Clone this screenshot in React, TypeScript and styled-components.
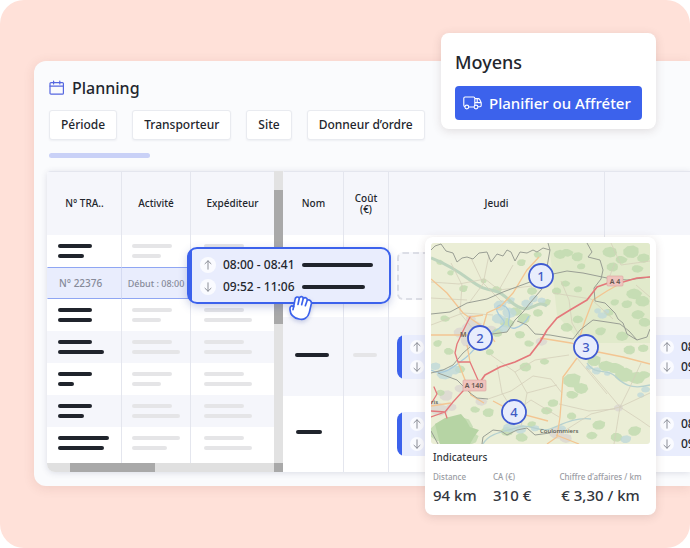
import React from "react";
import styled, { createGlobalStyle } from "styled-components";

const Global = createGlobalStyle`
  *, *::before, *::after { box-sizing: border-box; }
  body {
    margin: 0;
    background: #ffffff;
    color: #23262d;
    font-family: "Noto Sans", "Open Sans", sans-serif;
    font-weight: 500;
  }
`;

const BLUE = "#3c62ec";
const LINE = "#e4e6ee";
const STRIPE = "#f5f6fb";

const Hero = styled.main`
  position: relative;
  overflow: hidden;
  padding: 61px 0 62px 34px;
  border-radius: 24px;
  background: #ffe1d9;
`;

const Panel = styled.section`
  padding: 15px 0 14px 13px;
  border-radius: 12px 0 0 12px;
  background: #fafbfd;
  box-shadow: 0 2px 12px rgba(120, 60, 50, 0.12);
`;

const TitleRow = styled.header`
  display: flex;
  align-items: center;
  gap: 7px;
  padding-left: 2px;
`;

const Title = styled.h1`
  margin: 0;
  font-size: 16px;
  font-weight: 500;
  line-height: 24px;
`;

const Filters = styled.div`
  display: flex;
  gap: 15px;
  margin-top: 10px;
  padding-left: 2px;
`;

const FilterButton = styled.button`
  height: 30px;
  padding: 0 11px;
  border: 1px solid #e9ebf0;
  border-radius: 3px;
  background: #ffffff;
  box-shadow: 0 1px 2px rgba(40, 50, 90, 0.06);
  color: inherit;
  font: 500 12px/16px "Noto Sans", sans-serif;
  white-space: nowrap;
`;

const Progress = styled.div`
  width: 101px;
  height: 5px;
  margin: 13px 0 13px 2px;
  border-radius: 3px;
  background: #c9d1f7;
`;

const Board = styled.div`
  display: flex;
  overflow: hidden;
  border-radius: 4px 0 0 8px;
  box-shadow: 0 1px 6px rgba(60, 70, 110, 0.16);
  background: #ffffff;
`;

const Frozen = styled.div`
  flex: none;
  width: 227px;
`;

const Sheet = styled.table`
  width: 100%;
  table-layout: fixed;
  border-collapse: separate;
  border-spacing: 0;
`;

const Col = styled.col<{ $w?: number }>`
  width: ${(p) => (p.$w ? `${p.$w}px` : "auto")};
`;

const Head = styled.th`
  height: 64px;
  padding: 0;
  border-top: 1px solid ${LINE};
  border-left: 1px solid ${LINE};
  background: ${STRIPE};
  font-size: 10px;
  font-weight: 500;
  line-height: 11px;
  text-align: center;
  &:first-child { border-left-color: transparent; }
`;

const Row = styled.tr<{ $h: number; $striped?: boolean }>`
  height: ${(p) => p.$h}px;
  background: ${(p) => (p.$striped ? STRIPE : "#ffffff")};
`;

const BarCell = styled.td<{ $inset: number }>`
  padding: 9px 0 0 ${(p) => p.$inset}px;
  border-left: 1px solid ${LINE};
  vertical-align: top;
  &:first-child { border-left-color: transparent; }
`;

const PickedCell = styled.td`
  padding: 0;
  border-top: 1px solid #8fa6f3;
  border-bottom: 1px solid #8fa6f3;
  border-left: 1px solid #d5dbf2;
  background: #e9edfd;
  color: #868a99;
  font-size: 10px;
  text-align: center;
  white-space: nowrap;
  &:first-child {
    padding-left: 11px;
    border-left-color: #e9edfd;
    text-align: left;
  }
`;

const SmallText = styled.span`
  font-size: 9px;
`;

const Bar = styled.div<{ $w: number; $tone?: "dark" | "light" }>`
  width: ${(p) => p.$w}px;
  height: 4px;
  border-radius: 2px;
  background: ${(p) => (p.$tone === "light" ? "#e5e5e7" : "#20242c")};
  & + & { margin-top: 6px; }
`;

const HScroll = styled.div`
  height: 9px;
  padding-left: 23px;
  background: #e0e0e0;
`;

const HThumb = styled.div`
  width: 85px;
  height: 9px;
  background: #a9a9a9;
`;

const VScroll = styled.div`
  display: flex;
  flex: none;
  flex-direction: column;
  justify-content: space-between;
  width: 9px;
  padding-top: 19px;
  background: #e2e2e2;
`;

const VThumb = styled.div<{ $h: number }>`
  height: ${(p) => p.$h}px;
  background: #a9a9a9;
`;

const Timeline = styled.div`
  flex: 1;
  min-width: 0;
  overflow: hidden;
`;

const MidCell = styled.td<{ $inset: number }>`
  padding: 0 0 0 ${(p) => p.$inset}px;
  overflow: hidden;
  border-left: 1px solid ${LINE};
  &:first-child { border-left-color: transparent; }
`;

const LineCell = styled(MidCell)`
  padding-bottom: 4px;
`;

const Slot = styled.div`
  width: 200px;
  height: 48px;
  border: 2px dashed #dcdee6;
  border-radius: 6px;
  background: #f7f8fc;
`;

const Event = styled.div`
  display: grid;
  gap: 4px;
  width: 200px;
  padding: 4px 0 4px 13px;
  border-radius: 8px;
  background: linear-gradient(to right, ${BLUE} 5px, #e9edfd 5px);
`;

const Leg = styled.div<{ $gap: number }>`
  display: flex;
  align-items: center;
  gap: ${(p) => p.$gap}px;
  font-size: 12px;
  line-height: 16px;
  white-space: nowrap;
`;

const Dot = styled.span<{ $size: number }>`
  display: flex;
  flex: none;
  align-items: center;
  justify-content: center;
  width: ${(p) => p.$size}px;
  height: ${(p) => p.$size}px;
  border-radius: 50%;
  background: #fafbff;
`;

const Dragged = styled.div`
  position: absolute;
  top: 247px;
  left: 187px;
  display: grid;
  align-content: center;
  gap: 6px;
  width: 204px;
  height: 57px;
  padding-left: 11px;
  border: 2px solid ${BLUE};
  border-radius: 10px;
  background: linear-gradient(to right, ${BLUE} 3px, #e9edfd 3px);
  box-shadow: 0 3px 8px rgba(50, 70, 160, 0.25);
`;

const Grab = styled.svg`
  position: absolute;
  top: 295px;
  left: 288px;
  filter: drop-shadow(0 2px 2px rgba(50, 70, 160, 0.25));
`;

const Floating = styled.section`
  position: absolute;
  right: 34px;
  border-radius: 8px;
  background: #ffffff;
  box-shadow: 0 2px 10px rgba(90, 60, 60, 0.16);
`;

const Means = styled(Floating)`
  top: 33px;
  width: 215px;
  padding: 17px 14px 9px;
`;

const MeansTitle = styled.h2`
  margin: 0 0 12px;
  font-size: 18px;
  font-weight: 500;
  line-height: 24px;
`;

const Primary = styled.button`
  display: flex;
  align-items: center;
  gap: 7px;
  width: 100%;
  height: 34px;
  padding: 0 8px;
  border: 0;
  border-radius: 4px;
  background: ${BLUE};
  color: #ffffff;
  font: 500 15px/20px "Noto Sans", sans-serif;
  white-space: nowrap;
`;

const MapCard = styled(Floating)`
  top: 237px;
  width: 231px;
  padding: 6px 6px 9px;
`;

const MapSvg = styled.svg`
  display: block;
  width: 100%;
  height: auto;
  border-radius: 3px;
`;

const Subtitle = styled.h3`
  margin: 5px 2px 5px;
  color: #34373e;
  font-size: 10px;
  font-weight: 500;
  line-height: 16px;
`;

const Stats = styled.dl`
  display: grid;
  grid-template-columns: 60px 60px 1fr;
  margin: 0 2px;
`;

const Stat = styled.div<{ $center?: boolean }>`
  text-align: ${(p) => (p.$center ? "center" : "left")};
  white-space: nowrap;
`;

const StatLabel = styled.dt`
  color: #9a9ca3;
  font-size: 8px;
  line-height: 14px;
`;

const StatValue = styled.dd`
  margin: 0;
  color: #34373e;
  font-size: 15px;
  line-height: 22px;
`;

function CalendarIcon() {
  return (
    <svg width="16" height="16" viewBox="0 0 16 16" fill="none" stroke="#5567e0" strokeWidth="1.2" strokeLinecap="round" aria-hidden="true">
      <rect x="1" y="2.6" width="13.4" height="11.6" rx="1" />
      <path d="M1 6.1H14.4M4.6 1V4M10.8 1V4" />
    </svg>
  );
}

function TruckIcon() {
  return (
    <svg width="19" height="14" viewBox="0 0 19 14" fill="none" stroke="#ffffff" strokeWidth="1.1" strokeLinecap="round" strokeLinejoin="round" aria-hidden="true">
      <path d="M1.8 10.6C1 10.4.8 10 .8 9.2V2.2C.8 1.4 1.2 1 2 1H10.6C11.4 1 11.8 1.4 11.8 2.2V8.8M5.9 11H10.6M11.8 2.6H15.2C16 2.6 16.4 2.9 16.7 3.6L18.2 6.8V9.6C18.2 10.3 17.8 10.7 17 10.8H15.4M14.2 2.8V6.6H18M11.8 6.6H14.2" />
      <circle cx="3.8" cy="11" r="1.9" />
      <circle cx="13" cy="11" r="1.9" />
    </svg>
  );
}

function Arrow({ down }: { down?: boolean }) {
  return (
    <svg width="10" height="10" viewBox="0 0 10 10" fill="none" stroke="#8b8e97" strokeWidth="1" strokeLinecap="round" strokeLinejoin="round" aria-hidden="true">
      <path d={down ? "M5 .8V9.2M2 6.3L5 9.2L8 6.3" : "M5 9.2V.8M2 3.7L5 .8L8 3.7"} />
    </svg>
  );
}

const woods: [number, number, number][] = [
  [12, 190, 11], [26, 184, 13], [35, 193, 10], [22, 196, 12], [9, 150, 4], [44, 166, 4], [58, 170, 5],
  [128, 12, 6], [136, 9, 5], [147, 14, 5], [178, 10, 7], [190, 16, 5], [201, 9, 7], [212, 16, 6], [206, 25, 5],
  [182, 24, 5], [150, 24, 4], [134, 40, 4], [126, 48, 4], [147, 47, 4], [202, 50, 7], [212, 58, 6], [196, 62, 5],
  [206, 71, 6], [214, 79, 5], [184, 60, 4], [146, 76, 5], [136, 84, 5], [170, 89, 5], [190, 93, 6], [178, 69, 4],
  [116, 60, 4], [100, 48, 5], [85, 68, 5], [94, 76, 6], [106, 70, 5], [76, 79, 6], [67, 90, 5], [88, 92, 5],
  [98, 100, 4], [142, 138, 8], [149, 146, 7], [141, 151, 5], [164, 118, 6], [174, 124, 7], [184, 124, 7],
  [194, 132, 8], [205, 136, 8], [213, 131, 5], [199, 107, 5], [212, 106, 5], [113, 118, 4], [95, 124, 5],
  [122, 161, 5], [115, 167, 5], [141, 173, 4], [168, 183, 6], [160, 192, 5], [186, 194, 5], [204, 189, 6],
  [75, 188, 6], [91, 194, 5], [101, 182, 4], [28, 126, 5], [18, 108, 4], [7, 101, 4], [58, 109, 4],
  [9, 19, 3], [33, 46, 4], [52, 38, 3], [66, 46, 4], [91, 20, 4], [106, 12, 4], [14, 75, 4], [20, 30, 3],
];

const waters: [number, number, number][] = [
  [70, 63, 6], [77, 70, 7], [68, 75, 6], [80, 58, 4], [72, 86, 5], [96, 60, 5], [103, 56, 4], [110, 58, 4],
  [171, 72, 4], [167, 68, 3], [175, 69, 3], [158, 124, 3], [166, 128, 4], [176, 131, 3], [13, 130, 7], [24, 127, 5],
  [4, 124, 5], [78, 184, 6], [90, 186, 5], [104, 186, 4], [214, 146, 4], [210, 152, 3], [195, 197, 5], [130, 185, 4],
];

const towns: [number, number, number][] = [
  [42, 86, 9], [36, 98, 8], [52, 100, 7], [30, 90, 6], [39, 76, 5], [8, 165, 8], [16, 153, 6], [28, 146, 5],
  [50, 158, 5], [127, 190, 7], [134, 196, 6], [110, 98, 5], [188, 165, 4], [20, 165, 5], [60, 85, 4],
];

const blob = ([x, y, r]: [number, number, number], i: number) => {
  const points = Array.from({ length: 9 }, (_, k) => {
    const a = (k / 9) * Math.PI * 2;
    const d = r * (0.65 + 0.5 * Math.abs(Math.sin(i * 7.3 + k * 2.9)));
    return `${(x + Math.cos(a) * d * 1.15).toFixed(1)} ${(y + Math.sin(a) * d * 0.85).toFixed(1)}`;
  });
  return `M${points.join("L")}Z`;
};

const markers = [
  { n: 1, x: 110, y: 33 },
  { n: 2, x: 49, y: 95 },
  { n: 3, x: 155, y: 104 },
  { n: 4, x: 83, y: 169 },
];

function RouteMap() {
  return (
    <MapSvg viewBox="0 0 219 201" fontFamily="Noto Sans, sans-serif" role="img" aria-label="Carte">
      <rect width="219" height="201" fill="#ebeed6" />
      <path d="M118 0H219V100H150L126 72Z" fill="#e1eacb" />
      <path d={towns.map(blob).join("")} fill="#dedbd2" />
      <path d={woods.map(blob).join("")} fill="#bfd9ae" opacity=".8" />
      <path d="M4 181L14 175L30 171L35 177L39 184L48 187L43 194L39 201H9Z" fill="#b6d4a4" />
      <path d={waters.map(blob).join("")} fill="#bfd8d9" opacity=".8" />
      <path d="M0 15C18 22 28 29 39 37S52 45 64 48S78 61 90 65S106 56 116 63" fill="none" stroke="#bdd4bd" strokeWidth="3" />
      <path d="M0 127C12 134 22 124 33 116S46 99 64 88S69 78 66 68S82 61 78 76S92 86 98 73" fill="none" stroke="#a9cbdc" strokeWidth="1.3" />
      <path d="M156 120C164 133 176 125 184 133S200 147 219 142M52 201C58 189 78 188 88 184S108 190 119 186S143 174 160 176" fill="none" stroke="#b6d1cf" strokeWidth="1.3" />
      <g fill="none" stroke="#d4cfba" strokeWidth=".8">
        <path d="M0 39L28 41L54 36L68 47L101 43M20 20L31 42L29 70L42 86M58 12L52 41L38 60M40 15L52 40L71 59M82 22L68 47M0 55L36 57M0 82L32 70L62 72" />
        <path d="M60 112L84 129L96 150L126 142M57 156L80 148L102 133L120 136L131 150M84 129L104 117L138 112M66 122L71 150L83 169L100 157L128 174M96 150L90 184" />
        <path d="M130 38L138 57L141 80L155 104M122 50L160 56L182 76M184 20L176 40M205 42L219 54M180 0L190 22L219 18" />
        <path d="M156 125L174 146L189 164L209 177L219 184M189 164L160 171L130 190M189 164L219 150M189 164L183 201M189 164L198 146L210 120M146 115L176 151M128 161L158 168L184 166" />
      </g>
      <g fill="none" stroke="#f3c592" strokeWidth="1.3">
        <path d="M0 36L16 50L32 70L56 87L64 99M108 14L96 27L82 50L69 64L56 70L52 84M0 92H48" />
        <path d="M192 39L176 48L162 57L154 78L148 96M109 95L140 100L167 109L192 114L219 121M146 115L132 134L129 174L126 194L116 201" />
        <path d="M39 74L52 72M27 119L40 152L53 160M39 119L36 102M62 158L83 169L117 178M125 192L148 201M0 163L20 160" />
      </g>
      <g fill="none" stroke="#999e94" strokeWidth="1" strokeLinejoin="round">
        <path d="M0 7L4 3L10 1L15 8L22 10L26 19L31 15L36 14L42 16L48 10L56 9L60 19L66 11L72 13L76 7L80 9L84 18L89 9L96 10L102 7L106 9L112 5L119 7L116 24M117 0L119 7" />
        <path d="M0 71L19 69L36 60L56 56L72 49L99 39L110 33L122 31L136 28L152 30L176 35L196 37L219 34" />
        <path d="M111 46L99 60L92 69L84 77L76 89L61 91M86 78L96 82L104 91L119 92L142 96L149 87L162 77L176 79L189 81L198 88L206 97" />
        <path d="M156 0L161 9L157 14L169 17L172 27L170 36L163 45L164 58L174 60L184 70L187 76L192 80L196 91L206 97L216 94L219 86" />
        <path d="M0 130L12 127L22 122L32 110L39 104M7 130L26 137L39 150L46 155L57 156M0 188L7 201M51 201L52 194L62 187L70 188L76 192L86 187L96 185L104 192L119 190" />
      </g>
      <g fill="none" stroke="#e4787b" strokeWidth="1.7" strokeLinejoin="round" strokeLinecap="round">
        <path d="M219 34L206 35L192 39L180 39L166 44L156 57L139 67L126 75L116 87L109 99L99 112L84 119L69 124L54 132L47 142" />
        <path d="M42 143L32 148L22 159L14 169L0 174M39 74L32 88L26 101L24 110L27 119L39 119L47 137M3 144L6 151L0 161M0 168L14 169L16 175" strokeWidth="1.3" />
      </g>
      <g fill="#efc3bd" stroke="#dca39f" strokeWidth=".6">
        <rect x="32" y="137" width="23" height="11" rx="1" />
        <rect x="176" y="33" width="16" height="10" rx="1" />
      </g>
      <g fill="#62564f" textAnchor="middle" fontWeight="600">
        <text x="43" y="145" fontSize="7">A 140</text>
        <text x="184" y="41" fontSize="7">A 4</text>
      </g>
      <g fill="#55574f" fontSize="6">
        <text x="29" y="94" fontSize="7">M</text>
        <text x="0" y="161">ris</text>
        <text x="109" y="190">Coulommiers</text>
      </g>
      {markers.map((m) => (
        <g key={m.n}>
          <circle cx={m.x} cy={m.y} r="12" fill="#e8edfc" stroke="#3f5bd2" strokeWidth="1.8" />
          <text x={m.x} y={m.y + 5} textAnchor="middle" fontSize="13" fill="#3f5bc4">{m.n}</text>
        </g>
      ))}
    </MapSvg>
  );
}

function Shipment() {
  return (
    <Event>
      <Leg $gap={7}><Dot $size={14}><Arrow /></Dot>08:00 - 08:41</Leg>
      <Leg $gap={7}><Dot $size={14}><Arrow down /></Dot>09:52 - 11:06</Leg>
    </Event>
  );
}

type Lines = { bars: number[][]; striped?: boolean; h?: number };
const before: Lines[] = [{ bars: [[34, 26], [40, 29], [40, 48]] }];
const after: Lines[] = [
  { bars: [[34, 34], [40, 29], [40, 48]] },
  { bars: [[34, 46], [40, 48], [40, 48]], striped: true },
  { bars: [[34, 16], [40, 29], [40, 48]] },
  { bars: [[34, 26], [40, 48], [40, 48]], striped: true },
  { bars: [[51, 46], [48, 35], [40, 48]], h: 36 },
];
const insets = [10, 10, 13];

function BarRow({ bars, striped, h = 32 }: Lines) {
  return (
    <Row $h={h} $striped={striped}>
      {bars.map((pair, c) => (
        <BarCell key={c} $inset={insets[c]}>
          {pair.map((w, i) => <Bar key={i} $w={w} $tone={c ? "light" : "dark"} />)}
        </BarCell>
      ))}
    </Row>
  );
}

export default function App() {
  return (
    <>
      <Global />
      <Hero>
        <Panel>
          <TitleRow>
            <CalendarIcon />
            <Title>Planning</Title>
          </TitleRow>
          <Filters>
            {["Période", "Transporteur", "Site", "Donneur d’ordre"].map((f) => (
              <FilterButton key={f} type="button">{f}</FilterButton>
            ))}
          </Filters>
          <Progress />
          <Board>
            <Frozen>
              <Sheet>
                <colgroup><Col $w={74} /><Col $w={69} /><Col $w={84} /></colgroup>
                <thead>
                  <tr><Head>N° TRA..</Head><Head>Activité</Head><Head>Expéditeur</Head></tr>
                </thead>
                <tbody>
                  {before.map((r, i) => <BarRow key={i} {...r} />)}
                  <Row $h={32}>
                    <PickedCell>N° 22376</PickedCell>
                    <PickedCell><SmallText>Début : 08:00</SmallText></PickedCell>
                    <PickedCell />
                  </Row>
                  {after.map((r, i) => <BarRow key={i} {...r} />)}
                </tbody>
              </Sheet>
              <HScroll><HThumb /></HScroll>
            </Frozen>
            <VScroll><VThumb $h={134} /><VThumb $h={9} /></VScroll>
            <Timeline>
              <Sheet>
                <colgroup><Col $w={60} /><Col $w={45} /><Col $w={216} /><Col /></colgroup>
                <thead>
                  <tr><Head>Nom</Head><Head>Coût<br />(€)</Head><Head>Jeudi</Head><Head /></tr>
                </thead>
                <tbody>
                  <Row $h={82}>
                    <MidCell $inset={0} /><MidCell $inset={0} />
                    <MidCell $inset={8}><Slot /></MidCell>
                    <MidCell $inset={0} />
                  </Row>
                  <Row $h={79} $striped>
                    <LineCell $inset={11}><Bar $w={34} /></LineCell>
                    <LineCell $inset={9}><Bar $w={24} $tone="light" /></LineCell>
                    <MidCell $inset={8}><Shipment /></MidCell>
                    <MidCell $inset={42}><Shipment /></MidCell>
                  </Row>
                  <Row $h={76}>
                    <LineCell $inset={12}><Bar $w={26} /></LineCell>
                    <MidCell $inset={0} />
                    <MidCell $inset={8}><Shipment /></MidCell>
                    <MidCell $inset={42}><Shipment /></MidCell>
                  </Row>
                </tbody>
              </Sheet>
            </Timeline>
          </Board>
        </Panel>

        <Dragged>
          <Leg $gap={7}><Dot $size={16}><Arrow /></Dot>08:00 - 08:41<Bar $w={71} /></Leg>
          <Leg $gap={7}><Dot $size={16}><Arrow down /></Dot>09:52 - 11:06<Bar $w={63} /></Leg>
        </Dragged>
        <Grab width="25" height="26" viewBox="0 0 75 78" fill="#ffffff" stroke={BLUE} strokeWidth="5" strokeLinejoin="round" strokeLinecap="round" aria-hidden="true">
          <path d="M6 44C5 34 10 30 17 35L21 14C22 5 30 4 34 9C37 3 45 4 46 10C52 6 58 9 58 15C65 13 71 18 70 26L64 52C60 69 47 76 33 72C17 69 7 60 6 44Z" />
          <path d="M34 9L30 28M46 10L41 29M58 15L52 32M17 35L15 44" fill="none" />
        </Grab>

        <Means>
          <MeansTitle>Moyens</MeansTitle>
          <Primary type="button"><TruckIcon />Planifier ou Affréter</Primary>
        </Means>

        <MapCard>
          <RouteMap />
          <Subtitle>Indicateurs</Subtitle>
          <Stats>
            <Stat><StatLabel>Distance</StatLabel><StatValue>94 km</StatValue></Stat>
            <Stat><StatLabel>CA (€)</StatLabel><StatValue>310 €</StatValue></Stat>
            <Stat $center><StatLabel>Chiffre d’affaires / km</StatLabel><StatValue>€ 3,30 / km</StatValue></Stat>
          </Stats>
        </MapCard>
      </Hero>
    </>
  );
}
